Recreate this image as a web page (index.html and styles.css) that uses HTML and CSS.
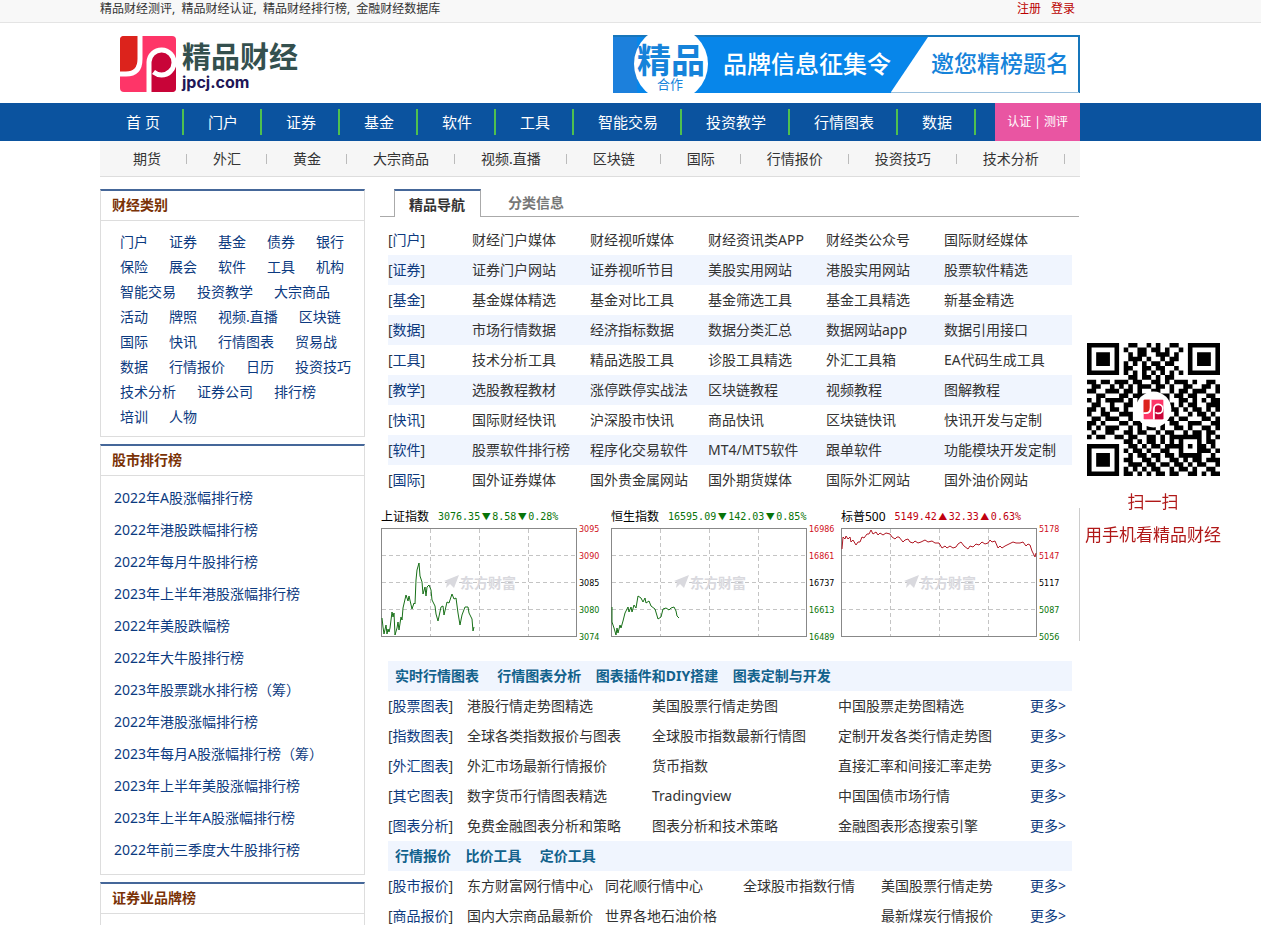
FILE: index.html
```html
<!DOCTYPE html>
<html lang="zh-CN">
<head>
<meta charset="utf-8">
<title>精品财经</title>
<link rel="stylesheet" href="styles.css">
</head>
<body>
<div class="topbar"><div class="wrap topbar-row">
<span>精品财经测评,&nbsp; 精品财经认证,&nbsp; 精品财经排行榜,&nbsp; 金融财经数据库</span>
<span class="account"><a href="#">注册</a><a href="#">登录</a></span>
</div></div>

<header class="wrap header">
<a href="#" class="logo" aria-label="精品财经 jpcj.com">
<svg width="190" height="64" viewBox="116 32 190 64">
<defs><clipPath id="tile"><rect x="120" y="36" width="56" height="56" rx="4"/></clipPath></defs>
<g id="mark" clip-path="url(#tile)">
<rect x="120" y="36" width="56" height="56" fill="#fe3568"/>
<path d="M120 36h18v22q0 14-13 14h-5z" fill="#dc231c"/>
<path d="M151 92V62a11 11 0 0 1 22 0h3v30z" fill="#c80438"/>
<path d="M140 34v25q0 15-14 15h-8" fill="none" stroke="#fff" stroke-width="5"/>
<path d="M149 94V62a12.500 12.500 0 1 1 12.500 13q-4 0-8-3" fill="none" stroke="#fff" stroke-width="5"/>
</g>
<text x="182" y="68" class="logo-cn">精品财经</text>
<text x="182" y="88" class="logo-en">jpcj.com</text>
</svg></a>
<a href="#" class="banner" aria-label="品牌信息征集令">
<svg width="467" height="58" viewBox="0 0 467 58">
<defs><clipPath id="ad"><rect width="467" height="58"/></clipPath></defs>
<g clip-path="url(#ad)">
<rect width="467" height="58" fill="#0786ea"/>
<rect width="24" height="58" fill="#1c80dc"/>
<path d="M315 2h150v55H278z" fill="#fff"/>
<path d="M0 1h466v57" fill="none" stroke="#1776bb" stroke-width="2"/>
<path d="M278 57.500h188" stroke="#9cc0dc"/>
<circle cx="58" cy="29" r="37" fill="#fff"/>
<text x="24" y="38" class="ad-big">精品</text>
<text x="44" y="54" class="ad-small">合作</text>
<text x="110" y="38" class="ad-main">品牌信息征集令</text>
<text x="318" y="37" class="ad-side">邀您精榜题名</text>
</g></svg></a>
</header>

<nav class="nav"><div class="wrap nav-row">
<a href="#">首 页</a><a href="#">门户</a><a href="#">证券</a><a href="#">基金</a><a href="#">软件</a><a href="#">工具</a><a href="#">智能交易</a><a href="#">投资教学</a><a href="#">行情图表</a><a href="#">数据</a>
<a href="#" class="certify">认证 | 测评</a>
</div></nav>
<div class="wrap"><nav class="subnav">
<a href="#">期货</a><a href="#">外汇</a><a href="#">黄金</a><a href="#">大宗商品</a><a href="#">视频.直播</a><a href="#">区块链</a><a href="#">国际</a><a href="#">行情报价</a><a href="#">投资技巧</a><a href="#">技术分析</a>
</nav></div>

<main class="wrap main">
<aside class="side">
<section class="box"><h2>财经类别</h2>
<div class="tags"><a href="#">门户</a><a href="#">证券</a><a href="#">基金</a><a href="#">债券</a><a href="#">银行</a><a href="#">保险</a><a href="#">展会</a><a href="#">软件</a><a href="#">工具</a><a href="#">机构</a><a href="#">智能交易</a><a href="#">投资教学</a><a href="#">大宗商品</a><a href="#">活动</a><a href="#">牌照</a><a href="#">视频.直播</a><a href="#">区块链</a><a href="#">国际</a><a href="#">快讯</a><a href="#">行情图表</a><a href="#">贸易战</a><a href="#">数据</a><a href="#">行情报价</a><a href="#">日历</a><a href="#">投资技巧</a><a href="#">技术分析</a><a href="#">证券公司</a><a href="#">排行榜</a><a href="#">培训</a><a href="#">人物</a></div>
</section>
<section class="box"><h2>股市排行榜</h2>
<ul class="ranks">
<li><a href="#">2022年A股涨幅排行榜</a></li>
<li><a href="#">2022年港股跌幅排行榜</a></li>
<li><a href="#">2022年每月牛股排行榜</a></li>
<li><a href="#">2023年上半年港股涨幅排行榜</a></li>
<li><a href="#">2022年美股跌幅榜</a></li>
<li><a href="#">2022年大牛股排行榜</a></li>
<li><a href="#">2023年股票跳水排行榜（筹）</a></li>
<li><a href="#">2022年港股涨幅排行榜</a></li>
<li><a href="#">2023年每月A股涨幅排行榜（筹）</a></li>
<li><a href="#">2023年上半年美股涨幅排行榜</a></li>
<li><a href="#">2023年上半年A股涨幅排行榜</a></li>
<li><a href="#">2022年前三季度大牛股排行榜</a></li>
</ul></section>
<section class="box box-last"><h2>证券业品牌榜</h2></section>
</aside>

<div class="content">
<div class="tabs"><button type="button" class="on">精品导航</button><button type="button">分类信息</button></div>
<div class="rows directory">
<div><b>[<a href="#">门户</a>]</b><a href="#">财经门户媒体</a><a href="#">财经视听媒体</a><a href="#">财经资讯类APP</a><a href="#">财经类公众号</a><a href="#">国际财经媒体</a></div>
<div><b>[<a href="#">证券</a>]</b><a href="#">证券门户网站</a><a href="#">证券视听节目</a><a href="#">美股实用网站</a><a href="#">港股实用网站</a><a href="#">股票软件精选</a></div>
<div><b>[<a href="#">基金</a>]</b><a href="#">基金媒体精选</a><a href="#">基金对比工具</a><a href="#">基金筛选工具</a><a href="#">基金工具精选</a><a href="#">新基金精选</a></div>
<div><b>[<a href="#">数据</a>]</b><a href="#">市场行情数据</a><a href="#">经济指标数据</a><a href="#">数据分类汇总</a><a href="#">数据网站app</a><a href="#">数据引用接口</a></div>
<div><b>[<a href="#">工具</a>]</b><a href="#">技术分析工具</a><a href="#">精品选股工具</a><a href="#">诊股工具精选</a><a href="#">外汇工具箱</a><a href="#">EA代码生成工具</a></div>
<div><b>[<a href="#">教学</a>]</b><a href="#">选股教程教材</a><a href="#">涨停跌停实战法</a><a href="#">区块链教程</a><a href="#">视频教程</a><a href="#">图解教程</a></div>
<div><b>[<a href="#">快讯</a>]</b><a href="#">国际财经快讯</a><a href="#">沪深股市快讯</a><a href="#">商品快讯</a><a href="#">区块链快讯</a><a href="#">快讯开发与定制</a></div>
<div><b>[<a href="#">软件</a>]</b><a href="#">股票软件排行榜</a><a href="#">程序化交易软件</a><a href="#">MT4/MT5软件</a><a href="#">跟单软件</a><a href="#">功能模块开发定制</a></div>
<div><b>[<a href="#">国际</a>]</b><a href="#">国外证券媒体</a><a href="#">国外贵金属网站</a><a href="#">国外期货媒体</a><a href="#">国际外汇网站</a><a href="#">国外油价网站</a></div>
</div>

<div class="charts">
<figure class="down"><figcaption><span>上证指数</span><span class="quote">3076.35<i>▼</i>8.58<i>▼</i>0.28%</span></figcaption>
<svg width="229" height="120" viewBox="0 0 229 120">
<g class="grid"><path d="M1 31.500h195M1 58.500h195M1 85.500h195M49.500 5v108M98.500 5v108M147.500 5v108"/></g>
<g class="water"><path d="M63 57l15-6-5 13-4-4-4 4 1-6z"/><text x="79" y="64">东方财富</text></g>
<rect class="frame" x="0.500" y="4.500" width="195" height="108"/>
<path class="line" d="M1 94L2 103 3 110 5 101 6 110 7 105 8 108 9 104 11 88 12 93 13 89 14 111 16 104 17 98 18 106 20 93 21 96 22 84 25 71 27 77 28 72 31 85 33 79 34 80 35 56 36 46 38 39 39 52 41 58 42 70 44 63 45 72 46 63 48 61 50 66 51 76 54 82 55 90 57 97 60 83 62 82 63 91 66 78 68 79 71 70 73 75 75 74 77 89 79 101 81 91 84 83 87 83 88 89 91 95 92 107 93 103"/>
<g class="scale"><text x="198" y="8" class="hi">3095</text><text x="198" y="35" class="hi">3090</text><text x="198" y="62">3085</text><text x="198" y="89" class="lo">3080</text><text x="198" y="116" class="lo">3074</text></g>
</svg></figure>
<figure class="down"><figcaption><span>恒生指数</span><span class="quote">16595.09<i>▼</i>142.03<i>▼</i>0.85%</span></figcaption>
<svg width="229" height="120" viewBox="0 0 229 120">
<g class="grid"><path d="M1 31.500h195M1 58.500h195M1 85.500h195M49.500 5v108M98.500 5v108M147.500 5v108"/></g>
<g class="water"><path d="M63 57l15-6-5 13-4-4-4 4 1-6z"/><text x="79" y="64">东方财富</text></g>
<rect class="frame" x="0.500" y="4.500" width="195" height="108"/>
<path class="line" d="M1 83v15l2 6 2 7 1-7 1 5 2-8 1 3 2-7 2-8 3-6 1 5 2-5 1 5 2-7 2 3 2-12 3 2 2 4 2-4 1 5 3-2 2 5 4 3 3 10 3-2 2-8 3-1 3 2 2-2 3-1 2 4 1 5 2 2"/>
<g class="scale"><text x="198" y="8" class="hi">16986</text><text x="198" y="35" class="hi">16861</text><text x="198" y="62">16737</text><text x="198" y="89" class="lo">16613</text><text x="198" y="116" class="lo">16489</text></g>
</svg></figure>
<figure class="up"><figcaption><span>标普500</span><span class="quote">5149.42<i>▲</i>32.33<i>▲</i>0.63%</span></figcaption>
<svg width="229" height="120" viewBox="0 0 229 120">
<g class="grid"><path d="M1 31.500h195M1 58.500h195M1 85.500h195M49.500 5v108M98.500 5v108M147.500 5v108"/></g>
<g class="water"><path d="M63 57l15-6-5 13-4-4-4 4 1-6z"/><text x="79" y="64">东方财富</text></g>
<rect class="frame" x="0.500" y="4.500" width="195" height="108"/>
<path class="line" d="M1 25L2 13 4 15 5 12 7 15 9 13 10 18 12 16 15 21 17 18 19 18 21 13 23 14 26 10 28 10 30 6 32 10 35 8 37 11 39 9 42 11 45 9 49 10 51 13 54 15 56 13 58 13 62 18 64 16 67 15 69 18 72 19 74 17 77 19 80 18 84 16 87 18 91 17 94 19 98 19 101 24 104 22 106 24 109 22 112 24 115 23 117 20 120 18 123 22 127 25 129 22 132 23 135 20 138 21 141 18 144 20 147 19 149 16 151 18 154 17 157 24 159 22 161 24 164 22 168 20 172 18 175 19 179 19 182 18 185 22 187 20 189 21 191 27 194 33 195 29"/>
<g class="scale"><text x="198" y="8" class="hi">5178</text><text x="198" y="35" class="hi">5147</text><text x="198" y="62">5117</text><text x="198" y="89" class="lo">5087</text><text x="198" y="116" class="lo">5056</text></g>
</svg></figure>
</div>

<section class="rows tools">
<h3><a href="#">实时行情图表</a>&nbsp;&nbsp;&nbsp;&nbsp;&nbsp;<a href="#">行情图表分析</a>&nbsp;&nbsp;&nbsp;&nbsp;<a href="#">图表插件和DIY搭建</a>&nbsp;&nbsp;&nbsp;&nbsp;<a href="#">图表定制与开发</a></h3>
<div><b>[<a href="#">股票图表</a>]</b><a href="#">港股行情走势图精选</a><a href="#">美国股票行情走势图</a><a href="#">中国股票走势图精选</a><a href="#" class="more">更多&gt;</a></div>
<div><b>[<a href="#">指数图表</a>]</b><a href="#">全球各类指数报价与图表</a><a href="#">全球股市指数最新行情图</a><a href="#">定制开发各类行情走势图</a><a href="#" class="more">更多&gt;</a></div>
<div><b>[<a href="#">外汇图表</a>]</b><a href="#">外汇市场最新行情报价</a><a href="#">货币指数</a><a href="#">直接汇率和间接汇率走势</a><a href="#" class="more">更多&gt;</a></div>
<div><b>[<a href="#">其它图表</a>]</b><a href="#">数字货币行情图表精选</a><a href="#">Tradingview</a><a href="#">中国国债市场行情</a><a href="#" class="more">更多&gt;</a></div>
<div><b>[<a href="#">图表分析</a>]</b><a href="#">免费金融图表分析和策略</a><a href="#">图表分析和技术策略</a><a href="#">金融图表形态搜索引擎</a><a href="#" class="more">更多&gt;</a></div>
</section>
<section class="rows prices">
<h3><a href="#">行情报价</a>&nbsp;&nbsp;&nbsp;&nbsp;<a href="#">比价工具</a>&nbsp;&nbsp;&nbsp;&nbsp;&nbsp;<a href="#">定价工具</a></h3>
<div><b>[<a href="#">股市报价</a>]</b><a href="#">东方财富网行情中心</a><a href="#">同花顺行情中心</a><a href="#">全球股市指数行情</a><a href="#">美国股票行情走势</a><a href="#" class="more">更多&gt;</a></div>
<div><b>[<a href="#">商品报价</a>]</b><a href="#">国内大宗商品最新价</a><a href="#">世界各地石油价格</a><span></span><a href="#">最新煤炭行情报价</a><a href="#" class="more">更多&gt;</a></div>
</section>
</div>
</main>

<div class="scan">
<svg width="133" height="133" viewBox="0 0 29 29" role="img" aria-label="二维码">
<path id="modules"/>
<circle cx="14.500" cy="14.500" r="3.900" fill="#fff"/>
<svg x="12.300" y="12.300" width="4.400" height="4.400" viewBox="120 36 56 56"><use href="#mark"/></svg>
</svg>
<p>扫一扫</p><p>用手机看精品财经</p>
</div>
<script src="qr.js"></script>
</body>
</html>
```
FILE: styles.css
```css
* { box-sizing: border-box; }
body {
  margin: 0;
  background: #fff;
  color: #333;
  font: 14px/20px "Noto Sans", "Noto Sans CJK SC", sans-serif;
}
a { color: inherit; text-decoration: none; white-space: nowrap; }
h2, h3, p, ul, figure { margin: 0; padding: 0; }

/* room on the right is kept for the scan panel */
body > .wrap, .topbar, .nav { padding-right: 81px; }
.wrap { max-width: 980px; margin: 0 auto; }
body > .wrap { max-width: 1061px; }

.topbar { background: #f8f8f8; border-bottom: 1px solid #e4e4e4; }
.topbar-row { display: flex; justify-content: space-between; height: 22px; padding-right: 5px; font-size: 12px; line-height: 17px; }
.account { display: flex; gap: 10px; color: #b00; }

.header { display: flex; justify-content: space-between; align-items: flex-start; height: 80px; padding-top: 9px; }
.logo { margin-left: 16px; }
.banner { margin-top: 3px; }
.header svg { display: block; }
.header text { font-family: "Noto Sans CJK SC", sans-serif; }
.logo-cn { font-size: 29px; font-weight: 700; fill: #34504e; }
.header .logo-en { font: 700 16px Inter, sans-serif; fill: #201656; }
.ad-big { font-size: 34px; font-weight: 700; fill: #1583da; }
.ad-small { font-size: 13px; fill: #1583da; }
.ad-main { font-size: 24px; font-weight: 500; fill: #fff; }
.ad-side { font-size: 23px; font-weight: 500; fill: #1583da; }

.nav { background: #0b539f; }
.nav-row { display: flex; align-items: center; height: 38px; padding-left: 2px; color: #fff; font-size: 15px; }
.nav-row a { padding: 0 22px 0 24px; border-right: 2px solid #4fc04f; line-height: 26px; }
.nav-row .certify { margin-left: auto; padding: 0 12px; border: 0; background: #e955a2; font-size: 12px; line-height: 38px; }

.subnav { display: flex; align-items: center; height: 36px; padding-left: 7px; background: #f6f6f6; border-bottom: 1px solid #ddd; }
.subnav a { display: flex; align-items: center; padding-left: 26px; }
.subnav a::after { content: ""; height: 10px; margin-left: 25px; border-right: 1px solid #bbb; }

.main { display: flex; gap: 15px; padding-top: 12px; }
.side { flex: 0 0 265px; display: flex; flex-direction: column; gap: 7px; color: #0c3a80; }
.box { border: 1px solid #ddd; border-top: 2px solid #456799; }
.box h2 { height: 30px; padding-left: 11px; border-bottom: 1px solid #ddd; color: #7a3206; font-size: 14px; line-height: 28px; }
.tags { display: flex; flex-wrap: wrap; column-gap: 21px; padding: 8px 8px 7px 19px; line-height: 25px; }
.ranks { padding: 6px 0 8px 13px; list-style: none; line-height: 32px; }
.box-last { min-height: 49px; border-bottom: 0; }

.content { flex: 1; min-width: 0; }
.tabs { display: flex; height: 28px; margin-right: 1px; padding-left: 14px; border-bottom: 1px solid #aaa; }
.tabs button { height: 27px; padding: 0 27px; border: 0; background: none; color: #777; font: inherit; font-weight: 700; }
.tabs .on { height: 28px; padding: 2px 15px 0 14px; background: #fff; border: 1px solid #aaa; border-top: 2px solid #456799; border-bottom: 0; color: #333; }

.rows { padding: 0 8px; line-height: 30px; }
.rows div { display: grid; }
.rows b { font-weight: 400; white-space: nowrap; }
.rows b a, .rows .more { color: #0c3a80; }
.directory { padding-top: 8px; }
.directory div { grid-template-columns: 84fr repeat(4, 118fr) 128fr; }
.directory div:nth-child(even), .rows h3 { background: #f0f5fe; }
.rows h3 { padding-left: 7px; color: #12628c; font-size: 14px; white-space: nowrap; }
.tools div { grid-template-columns: 79fr 185fr 186fr 192fr 42fr; }
.prices div { grid-template-columns: 79fr repeat(3, 138fr) 149fr 42fr; }

.charts { display: flex; height: 133px; margin: 13px 0 20px; padding-left: 1px; border-right: 1px solid #ccc; }
.charts figure { flex: 0 1 230px; }
.charts svg { display: block; }
figcaption { display: flex; gap: 9px; height: 16px; color: #000; font-size: 12px; line-height: 17px; white-space: nowrap; }
.quote { font: 10px/17px "DejaVu Sans Mono", monospace; }
.quote i { display: inline-block; width: 12px; font: 9px/16px "Noto Sans CJK SC", sans-serif; text-align: center; }
.down .quote { color: #087408; }
.up .quote { color: #c00010; }
.grid { fill: none; stroke: #c4c4c4; stroke-dasharray: 4 3; }
.frame { fill: none; stroke: #888; }
.water { fill: #d9d9de; font: 700 14px "Noto Sans CJK SC", sans-serif; }
.line { fill: none; stroke: #187018; stroke-width: 1; }
.up .line { stroke: #b01824; }
.scale { font: 8px "DejaVu Sans", sans-serif; fill: #000; }
.scale .hi { fill: #d01020; }
.scale .lo { fill: #087408; }

.scan { position: fixed; top: 343px; right: 38px; width: 140px; color: #b01818; font: 17px/33px "Noto Sans CJK SC", sans-serif; text-align: center; white-space: nowrap; }
.scan > svg { display: block; margin: 0 auto 8px; }
```
FILE: qr.js
```javascript
const rows = [
  "11111110011001010011001111111",
  "10000010100110110100101000001",
  "10111010010110011101001011101",
  "10111010011101001011001011101",
  "10111010101010110110001011101",
  "10000010110011011001001000001",
  "11111110101010101010101111111",
  "00000000011011010110000000000",
  "11011011101100110101110100110",
  "01100101010111011010011001101",
  "11001110110100110010110111001",
  "00110001101110001101101100110",
  "10101111010100000100110101011",
  "01100100110000000010101100111",
  "11010110100000000011010110101",
  "10011001110000000001001011010",
  "01101110010000000110110001101",
  "11010001101100001011001110011",
  "10101110010101101001101001101",
  "01001100110110010110010110110",
  "10110011011001101011111110101",
  "00000000110101101010100010110",
  "11111110011010110111101011010",
  "10000010101101001100100011101",
  "10111010010110110110111110010",
  "10111010110011010011010110111",
  "10111010011101101101101011001",
  "10000010101010110010110100110",
  "11111110110101011011001101011"
];
let d = "";
rows.forEach((row, y) => {
  for (const run of row.matchAll(/1+/g)) {
    d += `M${run.index} ${y}h${run[0].length}v1h-${run[0].length}z`;
  }
});
document.getElementById("modules").setAttribute("d", d);
```
